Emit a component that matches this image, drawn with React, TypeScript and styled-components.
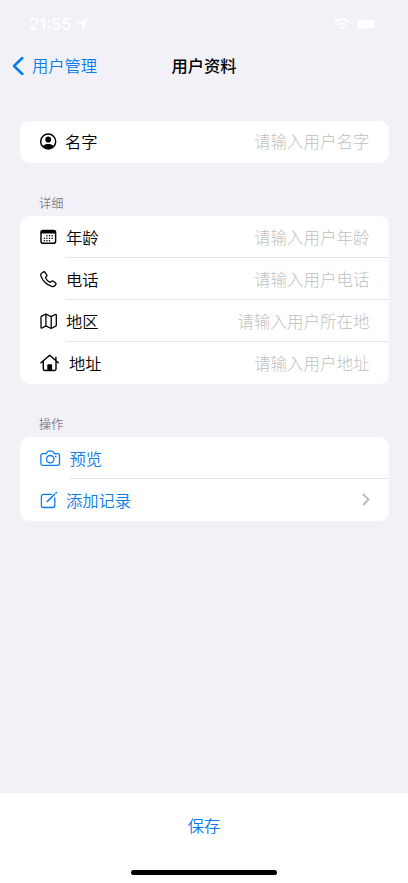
import React from 'react';
import styled, { createGlobalStyle } from 'styled-components';

const BLUE = '#087bed';

const GlobalStyle = createGlobalStyle`
  * { box-sizing: border-box; }
  body {
    margin: 0;
    background: #f2f1f7;
    font-family: "Noto Sans CJK SC", sans-serif;
    color: #000;
  }
  svg { display: block; flex: none; }
`;

const Screen = styled.div`
  width: 100%;
  height: 883px;
  display: flex;
  flex-direction: column;
  background: #f2f1f7;
  overflow: hidden;
`;

const StatusBar = styled.div`
  height: 45px;
  flex: none;
  display: flex;
  align-items: center;
  padding: 2px 29px 0 29px;
  color: #fff;
`;

const Clock = styled.span`
  font: 500 16.5px/20px Inter, sans-serif;
  width: 43px;
  margin-right: 4px;
  white-space: nowrap;
`;

const StatusIcons = styled.div`
  margin-left: auto;
  display: flex;
  align-items: center;
  gap: 7px;
`;

const NavBar = styled.header`
  height: 40px;
  flex: none;
  display: grid;
  grid-template-columns: 1fr auto 1fr;
  align-items: center;
  padding: 0 12px;
`;

const Back = styled.button`
  display: flex;
  align-items: center;
  gap: 8px;
  padding: 0;
  border: 0;
  background: none;
  color: ${BLUE};
  font: 350 16.3px/24px "Noto Sans CJK SC", sans-serif;

  svg { margin-top: 2px; }
`;

const Title = styled.h1`
  margin: 0;
  font-size: 16.3px;
  line-height: 24px;
  font-weight: 500;
`;

const Form = styled.main`
  flex: 1;
  padding: 35.5px 19.5px 0;
`;

const Card = styled.section`
  background: #fff;
  border-radius: 9.5px;
  overflow: hidden;
`;

const SectionTitle = styled.h2<{ $height: number }>`
  height: ${p => p.$height}px;
  margin: 0;
  padding: 0 0 4px 19.5px;
  display: flex;
  align-items: flex-end;
  font-size: 12.2px;
  line-height: 18px;
  font-weight: 350;
  color: #808086;
`;

const Row = styled.div<{ $accent?: boolean }>`
  display: flex;
  height: 42px;
  padding-left: 20px;
  color: ${p => (p.$accent ? BLUE : '#000')};
`;

const IconSlot = styled.div<{ $width: number }>`
  width: ${p => p.$width}px;
  flex: none;
  display: flex;
  align-items: center;
`;

const RowBody = styled.div<{ $divided?: boolean }>`
  flex: 1;
  display: flex;
  align-items: center;
  justify-content: space-between;
  padding-right: 19px;
  border-bottom: 1px solid ${p => (p.$divided ? '#e5e5e8' : 'transparent')};
  font-size: 16.3px;
  line-height: 24px;
  font-weight: 350;
`;

const Placeholder = styled.span`
  color: #bfbfc2;
  font-size: 16.5px;
  font-weight: 300;
`;

const Footer = styled.footer`
  height: 90px;
  flex: none;
  background: #fff;
  display: flex;
  flex-direction: column;
  align-items: center;
  padding-top: 20px;
`;

const Save = styled.button`
  padding: 0;
  border: 0;
  background: none;
  color: ${BLUE};
  font: 350 16.3px/24px "Noto Sans CJK SC", sans-serif;
`;

const HomeIndicator = styled.div`
  width: 146px;
  height: 5px;
  margin-top: 33px;
  border-radius: 3px;
  background: #000;
`;

const stroke = {
  fill: 'none',
  stroke: 'currentColor',
  strokeWidth: 1.45,
  strokeLinecap: 'round' as const,
  strokeLinejoin: 'round' as const,
};

const PersonIcon = () => (
  <svg width="17" height="17" viewBox="0 0 17 17">
    <circle cx="8.2" cy="8.5" r="7.5" {...stroke} />
    <ellipse cx="8.2" cy="6.5" rx="2.9" ry="3.1" fill="currentColor" />
    <path d="M2.700 13.200C4.100 11.500 6 10.900 8.200 10.900s4.100.6 5.500 2.300C12 15.200 10.200 15.900 8.200 15.900S4.400 15.200 2.700 13.200Z" fill="currentColor" />
  </svg>
);

const CalendarIcon = () => (
  <svg width="17" height="16" viewBox="0 0 17 16">
    <rect x="1" y="1.4" width="14.6" height="12.9" rx="2.1" {...stroke} />
    <path d="M.8 4.4V3.2C.8 1.9 1.7 1 3 1h10.6c1.3 0 2.2.9 2.2 2.2v1.2Z" fill="currentColor" />
    <g fill="currentColor">
      {[6.7, 9.2, 11.7].map((y, r) =>
        [4.3, 6.9, 9.5, 12.1]
          .filter((_, c) => !(r === 0 && c === 0) && !(r === 2 && c === 3))
          .map(x => <circle key={`${x}-${y}`} cx={x} cy={y} r=".8" />)
      )}
    </g>
  </svg>
);

const PhoneIcon = () => (
  <svg width="17" height="17" viewBox="0 0 17 17">
    <path d="M2.2 1.7 3.5.9c.6-.3 1.1-.1 1.5.4l1.7 2.5c.4.6.3 1.1-.1 1.5l-.8.9c-.3.3-.3.6-.1 1 .9 1.6 2.2 2.9 3.9 3.9.4.2.7.2 1-.1l.9-.8c.4-.4.9-.5 1.5-.1l2.4 1.6c.6.4.8 1 .4 1.6l-.8 1.2c-.8 1.1-1.9 1.3-3.4.9-4.8-1.3-9.5-6.1-10.7-10.5-.4-1.4-.1-2.5 1.2-3.2Z" {...stroke} strokeWidth="1.3" />
  </svg>
);

const MapIcon = () => (
  <svg width="18" height="17" viewBox="0 0 18 17">
    <path d="M1 4.1c0-.5.2-.8.6-1L5.9 1l5.3 2.6 4.1-2.1c.6-.3 1 0 1 .6v10.1c0 .5-.2.8-.6 1l-4.5 2.3-5.3-2.6-3.9 2.1c-.6.3-1 0-1-.6ZM5.9 1v11.9M11.2 3.6v11.9" {...stroke} strokeWidth="1.3" />
  </svg>
);

const HouseIcon = () => (
  <svg width="20" height="18" viewBox="0 0 20 18">
    <path d="m1 8.7 8.7-7.4 8.6 7.4M3.3 7.1v8c0 .9.5 1.4 1.4 1.4h9.9c.9 0 1.4-.5 1.4-1.4v-8M15.9 6.3V3.2" {...stroke} />
    <path d="M7.3 16.5v-5.4c0-.5.3-.8.8-.8h3.200c.5 0 .8.3.8.8v5.4Z" fill="currentColor" />
  </svg>
);

const CameraIcon = () => (
  <svg width="21" height="17" viewBox="0 0 21 17">
    <path d="M3 3.6h2.5c.5 0 .8-.2 1.1-.6l.7-1c.4-.6.8-.8 1.5-.8h3c.7 0 1.1.2 1.5.8l.7 1c.3.4.6.6 1.1.6h2.3c1.3 0 2.1.8 2.1 2.1v7.6c0 1.3-.8 2.1-2.1 2.1H3c-1.3 0-2.1-.8-2.1-2.1V5.7c0-1.3.8-2.1 2.1-2.1Z" {...stroke} strokeWidth="1.3" />
    <circle cx="10.2" cy="9.2" r="3.7" {...stroke} strokeWidth="1.3" />
    <circle cx="15.7" cy="6.5" r=".9" fill="currentColor" />
  </svg>
);

const ComposeIcon = () => (
  <svg width="18" height="18" viewBox="0 0 18 18">
    <path d="M11.5 3.3h-8C2.2 3.3 1.4 4.1 1.4 5.4v9c0 1.3.8 2.1 2.1 2.1h9.2c1.3 0 2.1-.8 2.1-2.1V6.8" {...stroke} strokeWidth="1.3" />
    <path d="m7.4 10.4 7.2-7.2M16 1.9l.3-.3" {...stroke} strokeWidth="1.5" />
    <path d="m6.5 11.4 1.7-.7-.9-.9Z" fill="currentColor" />
  </svg>
);

interface FieldProps {
  icon: React.ReactNode;
  slot: number;
  label: string;
  placeholder?: string;
  divided?: boolean;
  accent?: boolean;
  trailing?: React.ReactNode;
}

const Field = ({ icon, slot, label, placeholder, divided, accent, trailing }: FieldProps) => (
  <Row $accent={accent}>
    <IconSlot $width={slot}>{icon}</IconSlot>
    <RowBody $divided={divided}>
      <span>{label}</span>
      {placeholder && <Placeholder>{placeholder}</Placeholder>}
      {trailing}
    </RowBody>
  </Row>
);

export default function App() {
  return (
    <Screen>
      <GlobalStyle />
      <StatusBar>
        <Clock>21:55</Clock>
        <svg width="13" height="13" viewBox="0 0 13 13">
          <path d="M12.2.7 7.3 12.3c-.2.5-.9.4-.9-.2l-.1-5.4L.9 6.6C.3 6.6.2 5.9.7 5.7Z" fill="#fff" />
        </svg>
        <StatusIcons>
          <svg width="17" height="12" viewBox="0 0 17 12">
            <path d="M1 4.3c4.3-4 10.7-4 15 0M3.7 7.1c2.8-2.5 6.8-2.5 9.6 0" fill="none" stroke="#fff" strokeWidth="2" />
            <path d="m8.5 11.7-2.4-2.5c1.5-1.2 3.3-1.2 4.8 0Z" fill="#fff" />
          </svg>
          <svg width="22" height="12" viewBox="0 0 22 12">
            <rect x=".5" y="2" width="17" height="8.5" rx="2" fill="#fff" />
            <path d="M20 4.5c1.3.5 1.3 3 0 3.5Z" fill="#fff" opacity=".5" />
          </svg>
        </StatusIcons>
      </StatusBar>
      <NavBar>
        <Back>
          <svg width="12" height="20" viewBox="0 0 12 20">
            <path d="M10.3 2 2 10l8.3 8" fill="none" stroke="currentColor" strokeWidth="2.5" strokeLinecap="round" strokeLinejoin="round" />
          </svg>
          用户管理
        </Back>
        <Title>用户资料</Title>
      </NavBar>
      <Form>
        <Card>
          <Field icon={<PersonIcon />} slot={25.5} label="名字" placeholder="请输入用户名字" />
        </Card>
        <SectionTitle $height={53.5}>详细</SectionTitle>
        <Card>
          <Field icon={<CalendarIcon />} slot={26.5} label="年龄" placeholder="请输入用户年龄" divided />
          <Field icon={<PhoneIcon />} slot={26.5} label="电话" placeholder="请输入用户电话" divided />
          <Field icon={<MapIcon />} slot={26.5} label="地区" placeholder="请输入用户所在地" divided />
          <Field icon={<HouseIcon />} slot={29.5} label="地址" placeholder="请输入用户地址" />
        </Card>
        <SectionTitle $height={53.4}>操作</SectionTitle>
        <Card>
          <Field icon={<CameraIcon />} slot={30} label="预览" accent divided />
          <Field
            icon={<ComposeIcon />}
            slot={26.5}
            label="添加记录"
            accent
            trailing={
              <svg width="8" height="13" viewBox="0 0 8 13">
                <path d="m1.5 1.5 5 5-5 5" fill="none" stroke="#bcbcbf" strokeWidth="1.9" strokeLinecap="round" strokeLinejoin="round" />
              </svg>
            }
          />
        </Card>
      </Form>
      <Footer>
        <Save>保存</Save>
        <HomeIndicator />
      </Footer>
    </Screen>
  );
}
